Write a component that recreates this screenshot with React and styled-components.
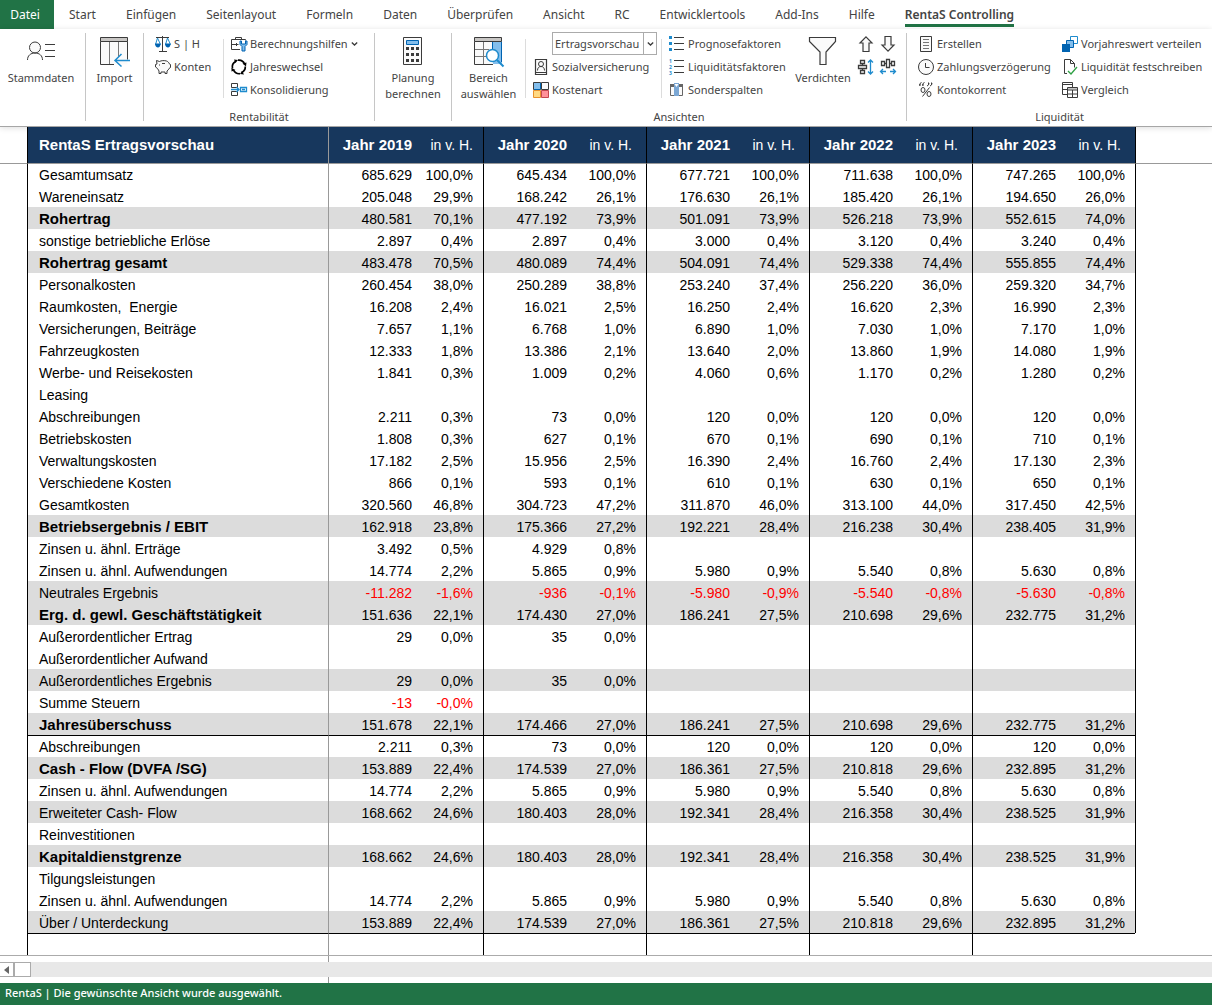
import React from 'react'
import styled, { createGlobalStyle, css } from 'styled-components'

const GlobalStyle = createGlobalStyle`
    * {
        box-sizing: border-box;
    }
    body {
        margin: 0;
        background: #fff;
        color: #444;
        font-family: 'Noto Sans', 'Open Sans', sans-serif;
        font-size: 11px;
    }
    button, select {
        font: inherit;
        color: inherit;
    }
    svg {
        flex: none;
        overflow: visible;
    }
`

const Page = styled.div`
    display: flex;
    flex-direction: column;
    min-height: 100vh;
`

/* ---------- tabs ---------- */

const Tabs = styled.nav`
    display: flex;
    gap: 30px;
    height: 29px;
    font-size: 12px;
    line-height: 17px;
`

const Tab = styled.a`
    height: 27px;
    padding-top: 6px;
    color: #444;
    text-decoration: none;
    white-space: nowrap;
    ${(p) =>
        p.$active &&
        css`
            border-bottom: 3px solid #217346;
            font-weight: 600;
        `}
`

const FileTab = styled.a`
    width: 54px;
    height: 29px;
    margin-right: -15px;
    padding: 6px 4px 0 0;
    background: #217346;
    color: #fff;
    text-align: center;
    text-decoration: none;
`

/* ---------- ribbon ---------- */

const Ribbon = styled.div`
    display: flex;
    height: 98px;
    border-bottom: 1px solid #a6a6a6;
    box-shadow: 0 1px 6px #0002;
`

const Group = styled.section`
    display: flex;
    flex-direction: column;
    justify-content: space-between;
    flex: ${(p) => (p.$width ? `0 0 ${p.$width}px` : '1 0 auto')};
`

const GroupBody = styled.div`
    display: flex;
`

const Caption = styled.div`
    line-height: 18px;
    text-align: center;
`

const Divider = styled.div`
    flex: 0 0 1px;
    height: 88px;
    margin-top: 4px;
    background: #c6c6c6;
`

const InnerDivider = styled(Divider)`
    height: 59px;
    margin-top: 10px;
    background: #dcdcdc;
`

const Column = styled.div`
    flex: 0 0 ${(p) => p.$width}px;
    padding: 3px 0 0 ${(p) => p.$indent || 7}px;
`

const SmallButton = styled.button`
    display: flex;
    align-items: center;
    gap: 3px;
    height: 23px;
    padding: 0;
    border: 0;
    background: none;
    line-height: 17px;
    white-space: nowrap;
`

const BigButton = styled.button`
    display: flex;
    flex-direction: column;
    align-items: center;
    gap: 2px;
    flex: 0 0 ${(p) => p.$width}px;
    padding: 7px 0 0;
    border: 0;
    background: none;
    line-height: 16px;
`

const ArrowGrid = styled.div`
    display: grid;
    grid-template-columns: 22px 22px;
    align-content: start;
    padding: 3px 0 0 2px;
`

const SelectBox = styled.div`
    position: relative;
    width: 105px;
    height: 23px;
    margin-left: 19px;
    border: 1px solid #ababab;
`

const ViewSelect = styled.select`
    display: block;
    width: 100%;
    height: 100%;
    padding: 0 0 0 2px;
    border: 0;
    background: none;
    appearance: none;
`

const SelectArrow = styled.span`
    position: absolute;
    top: 0;
    right: 0;
    bottom: 0;
    display: flex;
    align-items: center;
    justify-content: center;
    width: 13px;
    border-left: 1px solid #ababab;
    pointer-events: none;
`

/* ---------- sheet ---------- */

const Sheet = styled.table`
    width: 100%;
    border-spacing: 0;
    table-layout: fixed;
    color: #000;
    font-family: 'Liberation Sans', Arial, sans-serif;
    font-size: 14px;
    line-height: 20px;

    th, td {
        height: 22px;
        padding: 0;
        white-space: pre;
    }
    thead th {
        height: 37px;
        border-bottom: 1px solid #999;
    }
    tbody tr > * {
        vertical-align: bottom;
    }
    tbody tr:first-child > * {
        height: 21px;
    }
`

const Gutter = styled.td`
    border-left: ${(p) => (p.$line ? '1px solid #000' : '0')};
`

const shade = css`
    background: ${(p) => (p.$head ? '#17375d' : p.$shaded ? '#dcdcdc' : 'none')};
    border-top: ${(p) => (p.$ruled ? '1px solid #000' : '0')};
`

const Name = styled.th`
    ${shade}
    && {
        padding-left: 11px;
    }
    border-left: 1px solid #000;
    color: ${(p) => (p.$head ? '#fff' : '#000')};
    font-size: ${(p) => (p.$bold ? 15 : 14)}px;
    font-weight: ${(p) => (p.$bold ? 700 : 400)};
    text-align: left;
`

const Amount = styled.td`
    ${shade}
    border-left: 1px solid ${(p) => (p.$first ? '#999' : '#000')};
    color: ${(p) => (p.$head ? '#fff' : p.$negative ? '#f00' : '#000')};
    font-size: ${(p) => (p.$head ? 15 : 14)}px;
    font-weight: ${(p) => (p.$head ? 700 : 400)};
    text-align: right;
`

const Percent = styled.td`
    ${shade}
    && {
        padding-right: ${(p) => (p.$head && !p.$first ? 14 : 10)}px;
    }
    color: ${(p) => (p.$head ? '#fff' : p.$negative ? '#f00' : '#000')};
    font-weight: 400;
    text-align: right;
`

/* ---------- scroll bar and status ---------- */

const PaneEdge = styled.div`
    width: 329px;
    height: 6px;
    border-right: 1px solid #999;
`

const ScrollArea = styled.div`
    border-top: 1px solid #ababab;
`

const ScrollTrack = styled.div`
    display: flex;
    height: 15px;
    background: #e8e8e8;
`

const ScrollButton = styled.button`
    display: flex;
    align-items: center;
    justify-content: center;
    width: 14px;
    padding: 0;
    border: 1px solid #ababab;
    border-left: 0;
    background: #fff;
`

const ScrollThumb = styled.div`
    width: 17px;
    border: 1px solid #ababab;
    background: #fff;
`

const Status = styled.footer`
    flex: 1 0 22px;
    padding-left: 5px;
    background: #217346;
    color: #fff;
    font-weight: 500;
    line-height: 20px;
`

/* ---------- icons ---------- */

const DARK = '#3b3b3b'
const BLUE = '#1e8bcd'

const Icon = ({ w = 16, h = 16, children }) => (
    <svg width={w} height={h} viewBox={`0 0 ${w} ${h}`} fill="none" stroke={DARK} aria-hidden="true">
        {children}
    </svg>
)

const ContactIcon = () => (
    <Icon w={30} h={32}>
        <circle cx="9" cy="11.5" r="5.5" fill="#fafafa" />
        <path d="M1.5 24c0-4.500 3.200-7 7.500-7s7.500 2.500 7.500 7M19 8.500h10M19 14.500h10M19 20.500h10" />
    </Icon>
)

const ImportIcon = () => (
    <Icon w={30} h={32}>
        <path d="M.5 5.500h27v23H.5z" fill="#fafafa" stroke="none" />
        <path d="M.5 1.500h27v4H.5z" fill="#c8c6c4" />
        <path d="M14 28.500H.5v-23M27.500 5.500v18" />
        <path d="M9.500 6v22M18.500 6v15" stroke="#777" />
        <path d="M30 24.500H15M21.500 18l-6.500 6.500 6.500 6" stroke={BLUE} strokeWidth="1.500" />
    </Icon>
)

const CalculatorIcon = () => (
    <Icon w={20} h={32}>
        <path d="M.5 1.500h18v27H.5z" fill="#fafafa" />
        <path d="M3.500 4.500h12v4h-12z" fill="#83beec" stroke="#0063b1" />
        <path d="M3 12.500h13M3 18.500h13M3 24.500h13" strokeWidth="3" strokeDasharray="3 2" />
    </Icon>
)

const RangeIcon = () => (
    <Icon w={30} h={32}>
        <path d="M.5 5.500h27v23H.5z" fill="#fafafa" stroke="none" />
        <path d="M19 5h9v23h-9z" fill="#83beec" stroke="none" />
        <path d="M.5 1.500h27v4H.5z" fill="#c8c6c4" />
        <path d="M.5 5.500v23H19" />
        <path d="M9.500 6v22M1 13.500h14M1 20.500h11" stroke="#777" />
        <path d="M18.500 6v7M27.500 6v20" stroke="#0063b1" />
        <circle cx="18.500" cy="19.500" r="6" fill="#fff" stroke={BLUE} strokeWidth="1.500" />
        <path d="M23 24l6.500 6.500" stroke={BLUE} strokeWidth="2" />
    </Icon>
)

const FunnelIcon = () => (
    <Icon w={28} h={32}>
        <path d="M.5 1.500h26v4L17 16v12.500h-6V16L.5 5.500z" fill="#fafafa" strokeWidth="1.200" />
    </Icon>
)

const ScalesIcon = () => (
    <Icon>
        <path d="M1 1.500h13M7.500 0v15M4 15.500h8" />
        <path d="M2.500 2L.5 8.500h5zM12.500 2l-2 6.500h5z" stroke={BLUE} />
        <path d="M0 7.500h5.500c0 2.500-1 4-2.500 4s-3-1.500-3-4zM10 7.500h5.500c0 2.500-1 4-2.500 4s-3-1.500-3-4z" fill="#0063b1" stroke="none" />
    </Icon>
)

const PiggyIcon = () => (
    <Icon>
        <path d="M1.500 1.500l3 1c1.500-1 5-1.200 7-.5 1.500.5 2.300 1.500 2.500 2.500l1.500 1v3l-1.500 1c-.3 1-1 1.800-2 2.500v2.500h-2V13H6v1.500H4V12L2.500 9.500.500 8V5.500L2 5z" fill="#fafafa" />
        <path d="M4 6h1M7 4.500h3" />
    </Icon>
)

const ToolcaseIcon = () => (
    <Icon>
        <path d="M9 13.500H.5v-10h14v1M4.500 3.500v-2h6v2M.5 8.500h7M5.500 7v3" />
        <path d="M9 5v3.500l2 2V15h3v-4.500l2-2V5h-1.500v3h-4V5z" fill="#83beec" stroke="#0063b1" />
    </Icon>
)

const CycleIcon = () => (
    <Icon>
        <g stroke="#000" strokeWidth="1.700">
            <path d="M1.500 9.500a6.500 6.500 0 0 1 3-7M7 1.200a6.500 6.500 0 0 1 6.700 4M14.300 7.500a6.500 6.500 0 0 1-3.500 6M9 14.700a6.500 6.500 0 0 1-6.500-3.500" />
        </g>
        <path d="M3 .5l4 .5-2.500 3zM11.500 4.500l4-1-.5 4zM13 15.500l-4-.5 2-3zM4.500 11l-4 1.500V9z" fill="#000" stroke="none" />
    </Icon>
)

const ConsolidateIcon = () => (
    <Icon>
        <path d="M.5 5.500v-4h6v4zM.5 9.500h6v4h-6z" />
        <path d="M0 7.500h8M5.500 5L8 7.500 5.500 10" stroke={BLUE} strokeWidth="1.300" />
        <path d="M9.500 5.500h6v4h-6zM11 7.500h3" stroke={BLUE} strokeWidth="1.300" />
    </Icon>
)

const InsuranceIcon = () => (
    <Icon>
        <path d="M2.500.5h11v15h-11z" fill="#fafafa" strokeWidth="1.200" />
        <circle cx="8" cy="5" r="2.500" />
        <path d="M4.500 11.500c0-2.500 1.300-4 3.500-4s3.500 1.500 3.500 4M3 13.500h10" />
    </Icon>
)

const CostIcon = () => (
    <Icon>
        <path d="M.5.5h7v7h-7z" fill="#83beec" />
        <path d="M8.500.5h7v7h-7z" fill="#fafafa" />
        <path d="M.5 8.500h7v7h-7z" fill="#ffd983" stroke="#e8912d" />
        <path d="M8.500 8.500h7v7h-7z" fill="#ff9199" stroke="#c4474f" />
        <path d="M7.500 1v6M1 7.500h6" stroke="#0063b1" />
    </Icon>
)

const BulletsIcon = () => (
    <Icon>
        <path d="M0 1.500h3M0 7.500h3M0 13.500h3" stroke={BLUE} strokeWidth="3" />
        <path d="M5 1.500h10M5 7.500h10M5 13.500h10" />
    </Icon>
)

const NumbersIcon = () => (
    <Icon>
        <g fill={BLUE} stroke="none" fontSize="5" fontWeight="700">
            <text x="0" y="4">1</text>
            <text x="0" y="10">2</text>
            <text x="0" y="16">3</text>
        </g>
        <path d="M5 1.500h10M5 7.500h10M5 13.500h10" />
    </Icon>
)

const SpecialColumnsIcon = () => (
    <Icon>
        <path d="M1.500 2.500h12v11h-12z" fill="#fafafa" stroke="#666" />
        <path d="M1 3.500h13" stroke="#666" strokeWidth="3" />
        <path d="M5 1h5v13H5z" fill="#7ba7d4" stroke="none" />
        <path d="M5.500 2h4L7.500 5z" fill="#fff" stroke="none" />
    </Icon>
)

const ArrowUpIcon = () => (
    <Icon>
        <path d="M8 .8l6 6.200h-3v8.500H5V7H2z" fill="#fafafa" strokeWidth="1.200" />
    </Icon>
)

const ArrowDownIcon = () => (
    <Icon>
        <path d="M8 15.200L2 9h3V.5h6V9h3z" fill="#fafafa" strokeWidth="1.200" />
    </Icon>
)

const SpaceVerticalIcon = () => (
    <Icon>
        <path d="M2.500 1.500h4v3h-4zM.5 6.500h8v3h-8zM2.500 11.500h4v3h-4zM4.500 4.500v2M4.500 9.500v2" strokeWidth="1.300" />
        <path d="M12.500 1v14M10 3.500L12.500 1 15 3.500M10 12.500l2.500 2.500 2.500-2.500" stroke={BLUE} strokeWidth="1.300" />
    </Icon>
)

const SpaceHorizontalIcon = () => (
    <Icon>
        <path d="M1.500 2.500h3v4h-3zM6.500.5h3v8h-3zM11.500 2.500h3v4h-3zM4.500 4.500h2M9.500 4.500h2" strokeWidth="1.300" />
        <path d="M.5 12.500H6M10 12.500h5.500M3 10L.5 12.500 3 15M13 10l2.500 2.500L13 15" stroke={BLUE} strokeWidth="1.300" />
    </Icon>
)

const DocumentIcon = () => (
    <Icon>
        <path d="M2.500.5h11v15h-11z" fill="#fafafa" />
        <path d="M5 3.500h6M5 6.500h6M5 9.500h6M5 12.500h6" stroke="#777" />
    </Icon>
)

const ClockIcon = () => (
    <Icon>
        <circle cx="8" cy="8" r="7.500" fill="#fafafa" />
        <path d="M7.500 4v4.500h4" />
    </Icon>
)

const QuotePercentIcon = () => (
    <Icon>
        <path d="M3.500.5Q1.500 1 1.500 3.500M6.500.5Q4.500 1 4.500 3.500M9 4q2-.5 2-3M12 4q2-.5 2-3" />
        <path d="M1.500 3h1M4.500 3h1M10 1.500h1M13 1.500h1" strokeWidth="2" />
        <ellipse cx="5" cy="8" rx="2" ry="2.500" />
        <ellipse cx="11" cy="12" rx="2" ry="2.500" />
        <path d="M11.500 5.500l-7 9" />
    </Icon>
)

const CascadeIcon = () => (
    <Icon>
        <path d="M8.500.5h7v7h-7z" fill="#fff" stroke={BLUE} />
        <path d="M4.500 4.500h7v7h-7z" fill="#83beec" stroke="#0063b1" />
        <path d="M0 8h8v8H0z" fill="#0063b1" stroke="none" />
    </Icon>
)

const CheckedPageIcon = () => (
    <Icon>
        <path d="M5 14.500H2.500V.5h6l4 4v4M8.500.5v4h4" />
        <path d="M6 12l3 3 6-7" stroke="#2ea043" strokeWidth="1.300" />
    </Icon>
)

const CompareIcon = () => (
    <Icon>
        <path d="M5 12.500H.5V.5h10V5M.5 2.500h10M.5 7.500H5" />
        <path d="M5.500 5.500h10v10h-10zM5.500 8h10M5.500 12h10M10.500 8v7.500" fill="#fff" />
        <path d="M6 7h9" stroke="#888" />
    </Icon>
)

const ChevronIcon = () => (
    <Icon w={7} h={8}>
        <path d="M.8 2.500l2.700 2.500 2.700-2.500" strokeWidth="1.300" />
    </Icon>
)

/* ---------- data ---------- */

const tabs = ['Start', 'Einfügen', 'Seitenlayout', 'Formeln', 'Daten', 'Überprüfen', 'Ansicht', 'RC', 'Entwicklertools', 'Add-Ins', 'Hilfe']

const years = [2019, 2020, 2021, 2022, 2023]

// label, values ("amount percent" per year), flags: b = bold, s = shaded, r = ruled above
const rows = [
    ['Gesamtumsatz', '685.629 100,0%|645.434 100,0%|677.721 100,0%|711.638 100,0%|747.265 100,0%', ''],
    ['Wareneinsatz', '205.048 29,9%|168.242 26,1%|176.630 26,1%|185.420 26,1%|194.650 26,0%', ''],
    ['Rohertrag', '480.581 70,1%|477.192 73,9%|501.091 73,9%|526.218 73,9%|552.615 74,0%', 'bs'],
    ['sonstige betriebliche Erlöse', '2.897 0,4%|2.897 0,4%|3.000 0,4%|3.120 0,4%|3.240 0,4%', ''],
    ['Rohertrag gesamt', '483.478 70,5%|480.089 74,4%|504.091 74,4%|529.338 74,4%|555.855 74,4%', 'bs'],
    ['Personalkosten', '260.454 38,0%|250.289 38,8%|253.240 37,4%|256.220 36,0%|259.320 34,7%', ''],
    ['Raumkosten,  Energie', '16.208 2,4%|16.021 2,5%|16.250 2,4%|16.620 2,3%|16.990 2,3%', ''],
    ['Versicherungen, Beiträge', '7.657 1,1%|6.768 1,0%|6.890 1,0%|7.030 1,0%|7.170 1,0%', ''],
    ['Fahrzeugkosten', '12.333 1,8%|13.386 2,1%|13.640 2,0%|13.860 1,9%|14.080 1,9%', ''],
    ['Werbe- und Reisekosten', '1.841 0,3%|1.009 0,2%|4.060 0,6%|1.170 0,2%|1.280 0,2%', ''],
    ['Leasing', '', ''],
    ['Abschreibungen', '2.211 0,3%|73 0,0%|120 0,0%|120 0,0%|120 0,0%', ''],
    ['Betriebskosten', '1.808 0,3%|627 0,1%|670 0,1%|690 0,1%|710 0,1%', ''],
    ['Verwaltungskosten', '17.182 2,5%|15.956 2,5%|16.390 2,4%|16.760 2,4%|17.130 2,3%', ''],
    ['Verschiedene Kosten', '866 0,1%|593 0,1%|610 0,1%|630 0,1%|650 0,1%', ''],
    ['Gesamtkosten', '320.560 46,8%|304.723 47,2%|311.870 46,0%|313.100 44,0%|317.450 42,5%', ''],
    ['Betriebsergebnis / EBIT', '162.918 23,8%|175.366 27,2%|192.221 28,4%|216.238 30,4%|238.405 31,9%', 'bs'],
    ['Zinsen u. ähnl. Erträge', '3.492 0,5%|4.929 0,8%', ''],
    ['Zinsen u. ähnl. Aufwendungen', '14.774 2,2%|5.865 0,9%|5.980 0,9%|5.540 0,8%|5.630 0,8%', ''],
    ['Neutrales Ergebnis', '-11.282 -1,6%|-936 -0,1%|-5.980 -0,9%|-5.540 -0,8%|-5.630 -0,8%', 's'],
    ['Erg. d. gewl. Geschäftstätigkeit', '151.636 22,1%|174.430 27,0%|186.241 27,5%|210.698 29,6%|232.775 31,2%', 'bs'],
    ['Außerordentlicher Ertrag', '29 0,0%|35 0,0%', ''],
    ['Außerordentlicher Aufwand', '', ''],
    ['Außerordentliches Ergebnis', '29 0,0%|35 0,0%', 's'],
    ['Summe Steuern', '-13 -0,0%', ''],
    ['Jahresüberschuss', '151.678 22,1%|174.466 27,0%|186.241 27,5%|210.698 29,6%|232.775 31,2%', 'bs'],
    ['Abschreibungen', '2.211 0,3%|73 0,0%|120 0,0%|120 0,0%|120 0,0%', 'r'],
    ['Cash - Flow (DVFA /SG)', '153.889 22,4%|174.539 27,0%|186.361 27,5%|210.818 29,6%|232.895 31,2%', 'bs'],
    ['Zinsen u. ähnl. Aufwendungen', '14.774 2,2%|5.865 0,9%|5.980 0,9%|5.540 0,8%|5.630 0,8%', ''],
    ['Erweiteter Cash- Flow', '168.662 24,6%|180.403 28,0%|192.341 28,4%|216.358 30,4%|238.525 31,9%', 's'],
    ['Reinvestitionen', '', ''],
    ['Kapitaldienstgrenze', '168.662 24,6%|180.403 28,0%|192.341 28,4%|216.358 30,4%|238.525 31,9%', 'bs'],
    ['Tilgungsleistungen', '', ''],
    ['Zinsen u. ähnl. Aufwendungen', '14.774 2,2%|5.865 0,9%|5.980 0,9%|5.540 0,8%|5.630 0,8%', ''],
    ['Über / Unterdeckung', '153.889 22,4%|174.539 27,0%|186.361 27,5%|210.818 29,6%|232.895 31,2%', 's'],
    ['', '', 'r'],
]

const SheetRow = ({ row: [label, values, flags], last }) => {
    const cells = values.split('|')
    const look = { $shaded: flags.includes('s'), $ruled: flags.includes('r') }
    return (
        <tr>
            <Gutter />
            <Name scope="row" $bold={flags.includes('b')} {...look}>
                {label}
            </Name>
            {years.map((year, i) => {
                const [amount, percent] = (cells[i] || '').split(' ')
                const negative = amount.startsWith('-')
                return (
                    <React.Fragment key={year}>
                        <Amount $first={i === 0} $negative={negative} {...look}>
                            {amount}
                        </Amount>
                        <Percent $negative={negative} {...look}>
                            {percent}
                        </Percent>
                    </React.Fragment>
                )
            })}
            <Gutter $line={!last} />
        </tr>
    )
}

const Small = ({ icon: Glyph, children }) => (
    <SmallButton type="button">
        <Glyph />
        {children}
    </SmallButton>
)

const RibbonBar = () => (
    <Ribbon>
        <Group $width={85}>
            <GroupBody>
                <BigButton type="button" $width={82}>
                    <ContactIcon />
                    Stammdaten
                </BigButton>
            </GroupBody>
        </Group>
        <Divider />
        <Group $width={57}>
            <GroupBody>
                <BigButton type="button" $width={57}>
                    <ImportIcon />
                    Import
                </BigButton>
            </GroupBody>
        </Group>
        <Divider />
        <Group $width={230}>
            <GroupBody>
                <Column $width={79} $indent={11}>
                    <Small icon={ScalesIcon}>S | H</Small>
                    <Small icon={PiggyIcon}>Konten</Small>
                </Column>
                <InnerDivider />
                <Column $width={150}>
                    <Small icon={ToolcaseIcon}>
                        Berechnungshilfen
                        <ChevronIcon />
                    </Small>
                    <Small icon={CycleIcon}>Jahreswechsel</Small>
                    <Small icon={ConsolidateIcon}>Konsolidierung</Small>
                </Column>
            </GroupBody>
            <Caption>Rentabilität</Caption>
        </Group>
        <Divider />
        <Group $width={76}>
            <GroupBody>
                <BigButton type="button" $width={76}>
                    <CalculatorIcon />
                    <span>
                        Planung
                        <br />
                        berechnen
                    </span>
                </BigButton>
            </GroupBody>
        </Group>
        <Divider />
        <Group $width={454}>
            <GroupBody>
                <BigButton type="button" $width={73}>
                    <RangeIcon />
                    <span>
                        Bereich
                        <br />
                        auswählen
                    </span>
                </BigButton>
                <InnerDivider />
                <Column $width={135}>
                    <SelectBox>
                        <ViewSelect aria-label="Ansicht wählen" defaultValue="Ertragsvorschau">
                            <option>Ertragsvorschau</option>
                        </ViewSelect>
                        <SelectArrow>
                            <ChevronIcon />
                        </SelectArrow>
                    </SelectBox>
                    <Small icon={InsuranceIcon}>Sozialversicherung</Small>
                    <Small icon={CostIcon}>Kostenart</Small>
                </Column>
                <InnerDivider />
                <Column $width={128}>
                    <Small icon={BulletsIcon}>Prognosefaktoren</Small>
                    <Small icon={NumbersIcon}>Liquiditätsfaktoren</Small>
                    <Small icon={SpecialColumnsIcon}>Sonderspalten</Small>
                </Column>
                <BigButton type="button" $width={66}>
                    <FunnelIcon />
                    Verdichten
                </BigButton>
                <ArrowGrid>
                    <SmallButton type="button" aria-label="Nach oben">
                        <ArrowUpIcon />
                    </SmallButton>
                    <SmallButton type="button" aria-label="Nach unten">
                        <ArrowDownIcon />
                    </SmallButton>
                    <SmallButton type="button" aria-label="Zeilenabstand">
                        <SpaceVerticalIcon />
                    </SmallButton>
                    <SmallButton type="button" aria-label="Spaltenabstand">
                        <SpaceHorizontalIcon />
                    </SmallButton>
                </ArrowGrid>
            </GroupBody>
            <Caption>Ansichten</Caption>
        </Group>
        <Divider />
        <Group>
            <GroupBody>
                <Column $width={148} $indent={11}>
                    <Small icon={DocumentIcon}>Erstellen</Small>
                    <Small icon={ClockIcon}>Zahlungsverzögerung</Small>
                    <Small icon={QuotePercentIcon}>Kontokorrent</Small>
                </Column>
                <Column $width={156}>
                    <Small icon={CascadeIcon}>Vorjahreswert verteilen</Small>
                    <Small icon={CheckedPageIcon}>Liquidität festschreiben</Small>
                    <Small icon={CompareIcon}>Vergleich</Small>
                </Column>
            </GroupBody>
            <Caption>Liquidität</Caption>
        </Group>
    </Ribbon>
)

const App = () => (
    <Page>
        <GlobalStyle />
        <Tabs>
            <FileTab href="#datei">Datei</FileTab>
            {tabs.map((name) => (
                <Tab key={name} href={`#${name}`}>
                    {name}
                </Tab>
            ))}
            <Tab href="#rentas" $active>
                RentaS Controlling
            </Tab>
        </Tabs>
        <RibbonBar />
        <Sheet>
            <colgroup>
                <col style={{ width: 27 }} />
                <col style={{ width: 301 }} />
                {years.map((year, i) => (
                    <React.Fragment key={year}>
                        <col style={{ width: 84 }} />
                        <col style={{ width: i ? 79 : 71 }} />
                    </React.Fragment>
                ))}
                <col />
            </colgroup>
            <thead>
                <tr>
                    <Gutter as="th" />
                    <Name scope="col" $head $bold>
                        RentaS Ertragsvorschau
                    </Name>
                    {years.map((year, i) => (
                        <React.Fragment key={year}>
                            <Amount as="th" scope="col" $head $first={i === 0}>
                                Jahr {year}
                            </Amount>
                            <Percent as="th" scope="col" $head $first={i === 0}>
                                in v. H.
                            </Percent>
                        </React.Fragment>
                    ))}
                    <Gutter as="th" $line />
                </tr>
            </thead>
            <tbody>
                {rows.map((row, i) => (
                    <SheetRow key={i} row={row} last={i === rows.length - 1} />
                ))}
            </tbody>
        </Sheet>
        <ScrollArea>
            <PaneEdge />
            <ScrollTrack>
                <ScrollButton type="button" aria-label="Nach links">
                    <svg width="5" height="8" viewBox="0 0 5 8" fill="#666">
                        <path d="M5 0v8L0 4z" />
                    </svg>
                </ScrollButton>
                <ScrollThumb />
            </ScrollTrack>
            <PaneEdge />
        </ScrollArea>
        <Status>RentaS | Die gewünschte Ansicht wurde ausgewählt.</Status>
    </Page>
)

export default App
